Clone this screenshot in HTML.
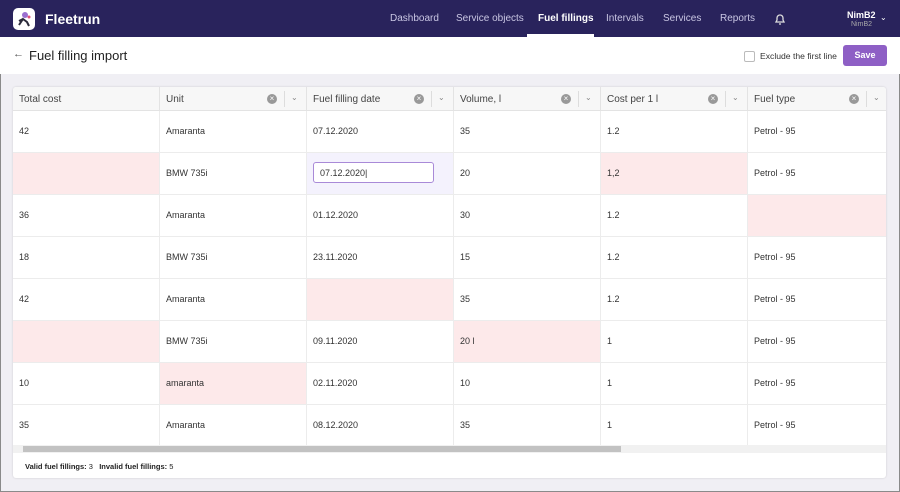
<!DOCTYPE html>
<html><head><style>
*{box-sizing:border-box;margin:0;padding:0}
body{width:900px;height:492px;overflow:hidden;font-family:"Liberation Sans",sans-serif;background:#f0eff4;position:relative;outline:1px solid #8a8a8a;outline-offset:-1px}
.top{position:absolute;left:0;top:0;width:900px;height:37px;background:#29235c;color:#fff}
.logo{position:absolute;left:13px;top:8px;width:22px;height:22px;background:#fff;border-radius:5px}
.brand{position:absolute;left:45px;top:11px;font-weight:bold;font-size:14px}
.nav{position:absolute;top:13px;font-size:10px;color:#c9c6e3}
.tb{position:absolute;left:0;top:37px;width:900px;height:37px;background:#fff}
.card{position:absolute;left:13px;top:87px;width:873px;height:391px;background:#fff;border-radius:3px;box-shadow:0 0 2px rgba(0,0,0,.15);overflow:hidden}
.hd{position:absolute;top:0;height:24px;background:#f7f7f7;border-bottom:1px solid #e3e3e3;border-right:1px solid #e3e3e3;font-size:10px;color:#444;padding:7px 0 0 6px}
.x{position:absolute;top:7px;width:10px;height:10px;border-radius:50%;background:#999;color:#fff;font-size:8px;line-height:10px;text-align:center}
.sep{position:absolute;top:4px;width:1px;height:16px;background:#ddd}
.dv{position:absolute;top:6px;font-size:8px;color:#888}
.c{position:absolute;height:42px;border-right:1px solid #ececec;border-bottom:1px solid #ececec;font-size:9px;color:#333;padding:15px 0 0 6px}
.p{background:#fde9ea}
</style></head><body>
<div class="top">
<div class="logo"><svg width="22" height="22"><circle cx="12" cy="7" r="3" fill="#9a6fd0"/><path d="M6 17l4-6 4 3 2 4M10 11l-4 2" stroke="#2b2a3a" stroke-width="2" fill="none"/><circle cx="16" cy="9" r="1.5" fill="#e0507a"/></svg></div>
<div class="brand">Fleetrun</div>
<div class="nav" style="left:390px">Dashboard</div>
<div class="nav" style="left:456px">Service objects</div>
<div class="nav" style="left:538px;color:#fff;font-weight:bold">Fuel fillings</div>
<div style="position:absolute;left:527px;top:34px;width:67px;height:3px;background:#fff"></div>
<div class="nav" style="left:606px">Intervals</div>
<div class="nav" style="left:663px">Services</div>
<div class="nav" style="left:720px">Reports</div>
<svg style="position:absolute;left:773px;top:12px" width="14" height="14"><path d="M3 10h8l-1-2V6a3 3 0 0 0-6 0v2zM6 12h2" stroke="#ddd" stroke-width="1.3" fill="none"/></svg>
<div style="position:absolute;left:847px;top:10px;font-size:9px;font-weight:bold">NimB2</div>
<div style="position:absolute;left:851px;top:21px;font-size:7px;color:#aaa">NimB2</div>
<div style="position:absolute;left:880px;top:13px;font-size:8px">⌄</div>
</div>
<div class="tb">
<div style="position:absolute;left:13px;top:11px;font-size:11px;color:#555">←</div>
<div style="position:absolute;left:29px;top:11px;font-size:13px;color:#222">Fuel filling import</div>
<div style="position:absolute;left:744px;top:14px;width:11px;height:11px;border:1px solid #bbb;border-radius:2px"></div>
<div style="position:absolute;left:760px;top:14px;font-size:8.6px;color:#333">Exclude the first line</div>
<div style="position:absolute;left:843px;top:8px;width:44px;height:21px;background:#8e5fc5;border-radius:3px;color:#fff;font-size:9px;font-weight:bold;text-align:center;line-height:21px">Save</div>
</div>
<div class="card">
<div class="hd" style="left:0;width:147px">Total cost</div>
<div class="hd" style="left:147px;width:147px">Unit<span class="x" style="left:107px">×</span><span class="sep" style="left:124px"></span><span class="dv" style="left:131px">⌄</span></div>
<div class="hd" style="left:294px;width:147px">Fuel filling date<span class="x" style="left:107px">×</span><span class="sep" style="left:124px"></span><span class="dv" style="left:131px">⌄</span></div>
<div class="hd" style="left:441px;width:147px">Volume, l<span class="x" style="left:107px">×</span><span class="sep" style="left:124px"></span><span class="dv" style="left:131px">⌄</span></div>
<div class="hd" style="left:588px;width:147px">Cost per 1 l<span class="x" style="left:107px">×</span><span class="sep" style="left:124px"></span><span class="dv" style="left:131px">⌄</span></div>
<div class="hd" style="left:735px;width:147px">Fuel type<span class="x" style="left:101px">×</span><span class="sep" style="left:118px"></span><span class="dv" style="left:125px">⌄</span></div>
<div id="rows"></div>
<div style="position:absolute;left:0;top:358px;width:873px;height:8px;background:#f1f1f1"><div style="position:absolute;left:10px;top:1px;width:598px;height:6px;background:#c2c2c2"></div></div>
<div style="position:absolute;left:12px;top:375px;font-size:7.5px;color:#222"><b>Valid fuel fillings:</b> 3 &nbsp; <b>Invalid fuel fillings:</b> 5</div>
</div>
<script>
var d=[["42","Amaranta","07.12.2020","35","1.2","Petrol - 95"],["","BMW 735i","*","20","1,2","Petrol - 95"],["36","Amaranta","01.12.2020","30","1.2",""],["18","BMW 735i","23.11.2020","15","1.2","Petrol - 95"],["42","Amaranta","","35","1.2","Petrol - 95"],["","BMW 735i","09.11.2020","20 l","1","Petrol - 95"],["10","amaranta","02.11.2020","10","1","Petrol - 95"],["35","Amaranta","08.12.2020","35","1","Petrol - 95"]];
var pk={"1,0":1,"1,4":1,"2,5":1,"4,2":1,"5,0":1,"5,3":1,"6,1":1};
var h="";d.forEach(function(r,i){r.forEach(function(v,j){var cls="c"+(pk[i+","+j]?" p":"");var st="left:"+(j*147)+"px;top:"+(24+i*42)+"px;width:"+(j==5?139:147)+"px;";
if(v=="*"){h+='<div class="'+cls+'" style="'+st+'background:#f4f2fd"><div style="position:absolute;left:6px;top:9px;width:121px;height:21px;border:1px solid #a98ad8;border-radius:3px;background:#fff;padding:5px 6px">07.12.2020|</div></div>';}
else h+='<div class="'+cls+'" style="'+st+'">'+v+'</div>';});});
document.getElementById("rows").innerHTML=h;
</script>
</body></html>
